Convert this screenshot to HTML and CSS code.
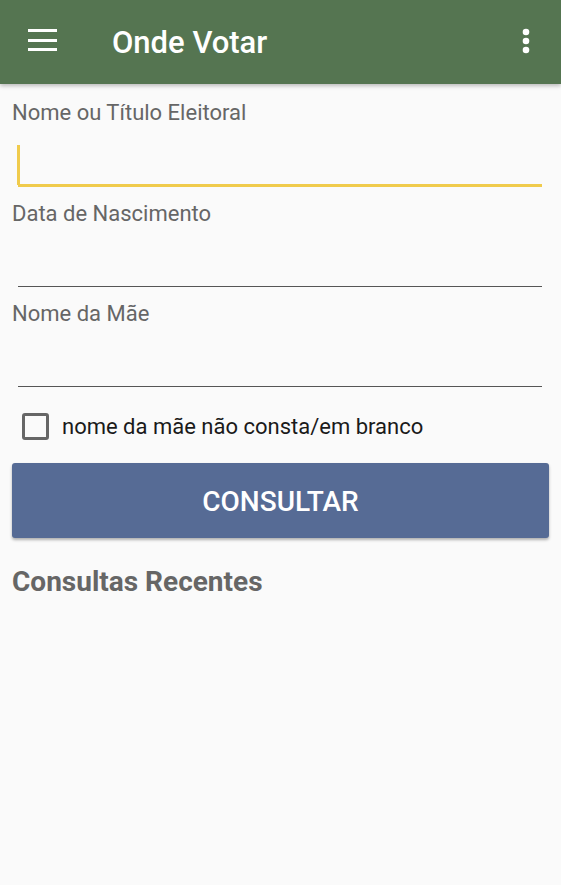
FILE: index.html
```html
<!DOCTYPE html>
<html lang="pt">
<head>
    <meta charset="UTF-8">
    <meta name="viewport" content="width=device-width, initial-scale=1.0">
    <title>Onde Votar</title>
    <link rel="stylesheet" href="styles.css">
</head>
<body>
    <!-- Barra superior -->
    <header class="toolbar">
        <svg class="menu-icon" width="29" height="22" viewBox="0 0 29 22">
            <rect x="0" y="0" width="29" height="3" fill="#fff"/>
            <rect x="0" y="10" width="29" height="3" fill="#fff"/>
            <rect x="0" y="19" width="29" height="3" fill="#fff"/>
        </svg>
        <h1 class="toolbar-title">Onde Votar</h1>
        <svg class="more-icon" width="8" height="26" viewBox="0 0 8 26">
            <circle cx="4" cy="4" r="3.3" fill="#fff"/>
            <circle cx="4" cy="13" r="3.3" fill="#fff"/>
            <circle cx="4" cy="22" r="3.3" fill="#fff"/>
        </svg>
    </header>

    <main class="content">
        <!-- Formulario -->
        <form class="search-form">
            <label class="field">
                <span class="field-label">Nome ou Título Eleitoral</span>
                <span class="field-input active"><span class="cursor"></span></span>
            </label>
            <label class="field">
                <span class="field-label">Data de Nascimento</span>
                <span class="field-input"></span>
            </label>
            <label class="field">
                <span class="field-label">Nome da Mãe</span>
                <span class="field-input"></span>
            </label>

            <label class="check">
                <span class="check-box"></span>
                <span class="check-text">nome da mãe não consta/em branco</span>
            </label>

            <button type="button" class="btn-consultar">CONSULTAR</button>
        </form>

        <h2 class="recentes">Consultas Recentes</h2>
    </main>
</body>
</html>
```

FILE: styles.css
```css
body {
    margin: 0;
    padding: 0;
    background-color: #fafafa;
    font-family: Roboto, "Noto Sans", sans-serif;
    min-height: 885px;
}

.toolbar {
    height: 84px;
    background-color: #557551;
    display: flex;
    align-items: center;
    padding: 0 31px 0 28px;
    box-shadow: 0 2px 4px rgba(0, 0, 0, 0.25);
    position: relative;
}

.menu-icon {
    margin-top: -5px;
}

.toolbar-title {
    margin: 0 0 0 55px;
    font-size: 31px;
    font-weight: 500;
    color: #ffffff;
    flex: 1;
}

.more-icon {
    margin-top: -3px;
}

.content {
    padding: 0 12px;
}

.search-form {
    display: flex;
    flex-direction: column;
}

.field {
    display: flex;
    flex-direction: column;
    height: 100px;
}

.field:first-child {
    height: 103px;
}

.field-label {
    font-size: 22px;
    color: #666666;
    margin-top: 14px;
    line-height: 26px;
}

.field:first-child .field-label {
    margin-top: 16px;
}

.field-input {
    display: block;
    margin: 0 7px 0 6px;
    height: 59px;
    border-bottom: 1px solid #555555;
    position: relative;
}

.field-input.active {
    border-bottom: 3px solid #f0cb4c;
    height: 59px;
}

.cursor {
    position: absolute;
    left: -1px;
    top: 19px;
    width: 3px;
    height: 40px;
    background-color: #f0cb4c;
}

.check {
    display: flex;
    align-items: center;
    margin: 25px 0 0 10px;
    height: 28px;
}

.check-box {
    width: 21px;
    height: 21px;
    border: 3px solid #666666;
    border-radius: 3px;
}

.check-text {
    margin-left: 13px;
    font-size: 22px;
    color: #1a1a1a;
}

.btn-consultar {
    margin-top: 23px;
    height: 75px;
    border: none;
    border-radius: 3px;
    background-color: #566b95;
    color: #ffffff;
    font-family: Roboto, "Noto Sans", sans-serif;
    font-size: 28px;
    font-weight: 500;
    padding-top: 2px;
    box-shadow: 0 2px 3px rgba(0, 0, 0, 0.3);
}

.recentes {
    margin: 27px 0 0 0;
    font-size: 28px;
    font-weight: 700;
    color: #666666;
}
```
